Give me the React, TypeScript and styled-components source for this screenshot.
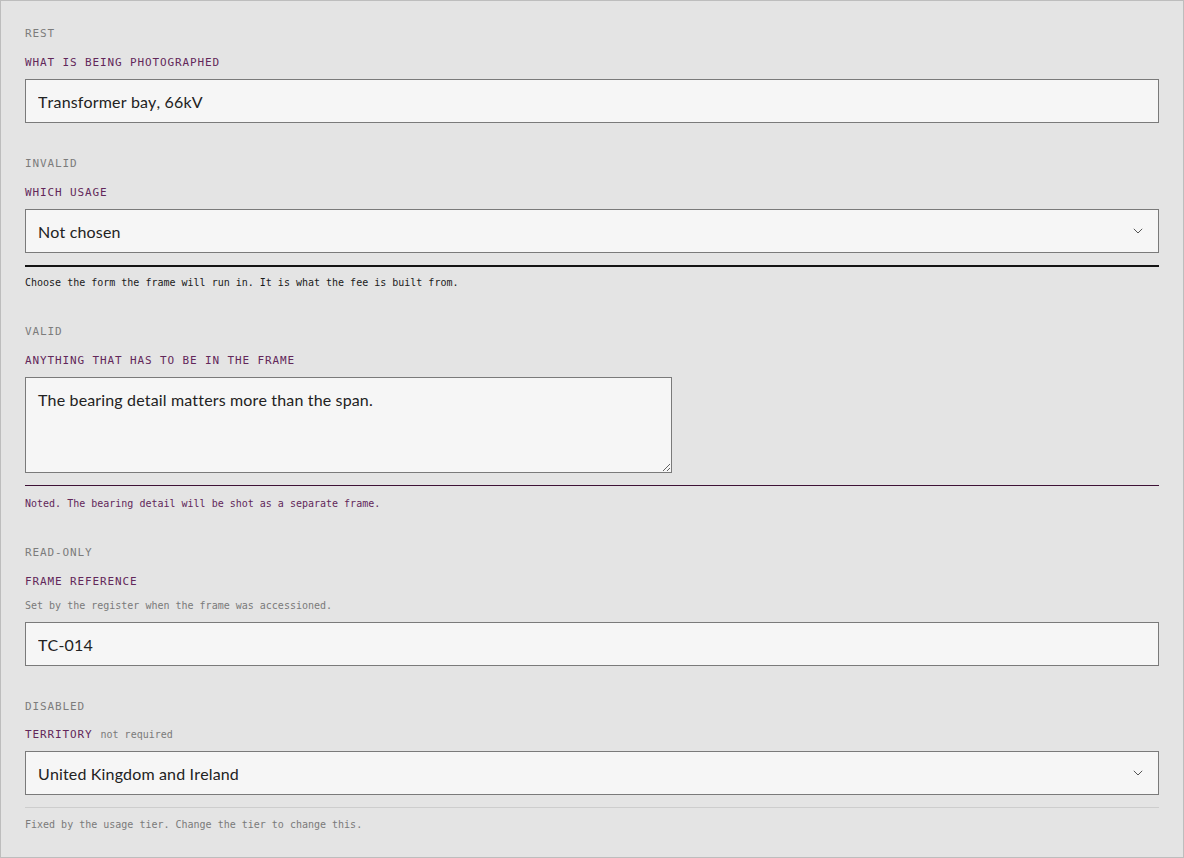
import React from "react";
import styled, { createGlobalStyle } from "styled-components";

const Global = createGlobalStyle`
  html, body { margin: 0; padding: 0; background: #e4e4e4; }
  * { box-sizing: border-box; }
`;

const MONO = `"DejaVu Sans Mono", "Liberation Mono", monospace`;
const SANS = `Lato, "Noto Sans", sans-serif`;

const Page = styled.div`
  width: 1184px;
  border: 1px solid #bdbdbd;
  background: #e4e4e4;
  padding: 24px;
  display: flex;
  flex-direction: column;
  gap: 32px;
`;

const Section = styled.section`
  display: flex;
  flex-direction: column;
`;

const StateTag = styled.div`
  font-family: ${MONO};
  font-size: 11px;
  line-height: 16px;
  padding-top: 1px;
  letter-spacing: 0.08em;
  color: #7c7c7c;
  text-transform: uppercase;
  margin-bottom: 12px;
`;

const FieldLabel = styled.label<{ $hasNote?: boolean }>`
  font-family: ${MONO};
  font-size: 11px;
  line-height: 16px;
  padding-top: 1px;
  letter-spacing: 0.08em;
  color: #62275a;
  text-transform: uppercase;
  margin-top: ${(p) => (p.$hasNote ? "-1px" : "0")};
  margin-bottom: 8px;
  display: flex;
  align-items: baseline;
`;

const Optional = styled.span`
  font-size: 10px;
  letter-spacing: 0;
  text-transform: none;
  color: #7a7a7a;
  margin-left: 8px;
`;

const Hint = styled.div`
  font-family: ${MONO};
  font-size: 10px;
  line-height: 16px;
  color: #7a7a7a;
  margin-top: -1px;
  padding-top: 1px;
  margin-bottom: 8px;
`;

const fieldText = `
  font-family: ${SANS};
  font-size: 16px;
  font-kerning: none;
  letter-spacing: 0.15px;
  color: #222;
`;

const Input = styled.input`
  width: 100%;
  height: 44px;
  border: 1px solid #7a7a7a;
  border-radius: 0;
  background: #f6f6f6;
  padding: 0 12px;
  ${fieldText}
  outline: none;
`;

const SelectBox = styled.div`
  width: 100%;
  height: 44px;
  border: 1px solid #7a7a7a;
  background: #f6f6f6;
  padding: 0 15px 0 12px;
  display: flex;
  align-items: center;
  justify-content: space-between;
  ${fieldText}
`;

const Chevron = styled.svg`
  width: 10px;
  height: 6px;
  flex: none;
`;

const TextArea = styled.textarea`
  width: 647px;
  height: 96px;
  border: 1px solid #7a7a7a;
  border-radius: 0;
  background: #f6f6f6;
  padding: 10px 12px;
  ${fieldText}
  line-height: 24px;
  resize: vertical;
  outline: none;
  display: block;
`;

type Tone = "error" | "valid" | "muted";

const toneStyles: Record<Tone, { border: string; color: string; pad: number }> = {
  error: { border: "2px solid #141414", color: "#1a1a1a", pad: 8 },
  valid: { border: "1px solid #3e1236", color: "#62275a", pad: 10 },
  muted: { border: "1px solid #cdcdcd", color: "#7a7a7a", pad: 9 },
};

const Message = styled.div<{ $tone: Tone }>`
  margin-top: 12px;
  padding-top: ${(p) => toneStyles[p.$tone].pad}px;
  border-top: ${(p) => toneStyles[p.$tone].border};
  font-family: ${MONO};
  font-size: 10px;
  line-height: 16px;
  color: ${(p) => toneStyles[p.$tone].color};
`;

const ChevronIcon = () => (
  <Chevron viewBox="0 0 10 6">
    <path d="M0.8 0.8 L5 5 L9.2 0.8" fill="none" stroke="#555" strokeWidth="1" />
  </Chevron>
);

export default function App() {
  return (
    <>
      <Global />
      <Page>
        <Section>
          <StateTag>Rest</StateTag>
          <FieldLabel>What is being photographed</FieldLabel>
          <Input defaultValue="Transformer bay, 66kV" />
        </Section>

        <Section>
          <StateTag>Invalid</StateTag>
          <FieldLabel>Which usage</FieldLabel>
          <SelectBox>
            <span>Not chosen</span>
            <ChevronIcon />
          </SelectBox>
          <Message $tone="error">
            Choose the form the frame will run in. It is what the fee is built from.
          </Message>
        </Section>

        <Section>
          <StateTag>Valid</StateTag>
          <FieldLabel>Anything that has to be in the frame</FieldLabel>
          <TextArea defaultValue="The bearing detail matters more than the span." />
          <Message $tone="valid">
            Noted. The bearing detail will be shot as a separate frame.
          </Message>
        </Section>

        <Section>
          <StateTag>Read-only</StateTag>
          <FieldLabel>Frame reference</FieldLabel>
          <Hint>Set by the register when the frame was accessioned.</Hint>
          <Input defaultValue="TC-014" readOnly />
        </Section>

        <Section>
          <StateTag>Disabled</StateTag>
          <FieldLabel $hasNote>
            Territory<Optional>not required</Optional>
          </FieldLabel>
          <SelectBox>
            <span>United Kingdom and Ireland</span>
            <ChevronIcon />
          </SelectBox>
          <Message $tone="muted">
            Fixed by the usage tier. Change the tier to change this.
          </Message>
        </Section>
      </Page>
    </>
  );
}
